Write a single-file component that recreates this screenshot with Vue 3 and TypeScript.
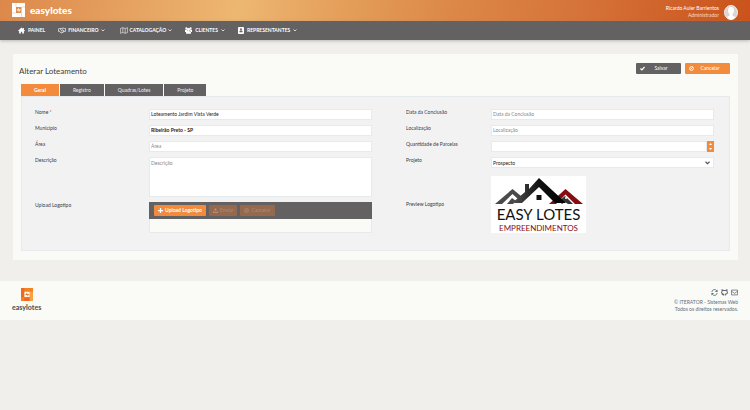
<script setup lang="ts">
import { ref } from 'vue'

interface MenuItem { label: string; icon: string; sub: boolean }

const menu: MenuItem[] = [
  { label: 'PAINEL', icon: 'home', sub: false },
  { label: 'FINANCEIRO', icon: 'hand', sub: true },
  { label: 'CATALOGAÇÃO', icon: 'map', sub: true },
  { label: 'CLIENTES', icon: 'users', sub: true },
  { label: 'REPRESENTANTES', icon: 'book', sub: true },
]
const tabs = ['Geral', 'Registro', 'Quadras/Lotes', 'Projeto']
const active = ref('Geral')
const nome = ref('Loteamento Jardim Vista Verde')
const municipio = ref('Ribeirão Preto - SP')
const area = ref('')
const descricao = ref('')
const data = ref('')
const local = ref('')
const parcelas = ref<number | null>(null)
const projeto = ref('Prospecto')

function step(by: number) {
  parcelas.value = Math.max(0, (parcelas.value ?? 0) + by)
}
</script>

<template>
  <div class="page">
    <header class="top">
      <a class="brand" href="#">
        <svg class="mark" viewBox="0 0 26 28" aria-hidden="true">
          <path fill="#fff" fill-rule="evenodd" d="M0 0H26V28H0ZM8 8V20H19V8Z" />
          <path fill="none" stroke="#e7b083" stroke-width="1" d="M8 0V8M19 8H26M19 20V28M0 20H8" />
          <path fill="#fff" d="M14 9l-1 4h5l-5 6 1-4H9z" />
        </svg>
        <span>easylotes</span>
      </a>
      <div class="user">
        <div class="who">
          <span>Ricardo Auler Barrientos</span>
          <span class="role">Administrador</span>
        </div>
        <svg class="avatar" viewBox="0 0 28 30" aria-hidden="true">
          <ellipse cx="14" cy="15" rx="13" ry="14" fill="#d8d6d5" stroke="#f5eeea" stroke-width="2" />
          <path fill="#fff" d="M14 4c4 0 6 3 6 7 0 3-1 5-3 7v3l5 3c-2 3-4 5-8 5s-6-2-8-5l5-3v-3c-2-2-3-4-3-7 0-4 2-7 6-7z" />
        </svg>
      </div>
    </header>

    <nav class="menu">
      <a v-for="m in menu" :key="m.label" href="#" :class="['item', m.icon]">
        <svg v-if="m.icon === 'home'" class="ico" viewBox="0 0 16 16" aria-hidden="true"><path fill="currentColor" d="M8 1 0 8.500l1 1.200 1.500-1.200V15h4v-4h3v4h4V8.500L15 9.700l1-1.200-2.500-2.300V2h-2v2.200z" /></svg>
        <svg v-else-if="m.icon === 'hand'" class="ico" viewBox="0 0 20 14" aria-hidden="true"><path fill="none" stroke="currentColor" stroke-width="1.800" d="M1 2v7h2l5 4 3-1 5-3h3V2h-3l-3-1-4 1-3 3 2 2 3-2 5 4M3 2h5M9 10l2 2M11 8l3 2" /></svg>
        <svg v-else-if="m.icon === 'map'" class="ico" viewBox="0 0 20 16" aria-hidden="true"><path fill="none" stroke="currentColor" stroke-width="1.400" d="M1 3l6-2 6 2 6-2v12l-6 2-6-2-6 2zM7 1v12M13 3v12" /></svg>
        <svg v-else-if="m.icon === 'users'" class="ico" viewBox="0 0 20 18" aria-hidden="true"><path fill="currentColor" d="M4 0a3 3 0 1 1 0 6 3 3 0 0 1 0-6zM16 0a3 3 0 1 1 0 6 3 3 0 0 1 0-6zM10 2a4 4 0 1 1 0 8 4 4 0 0 1 0-8zM0 7h5l2 4-3 2H0zM20 7h-5l-2 4 3 2h4zM3 18v-5l3-3h8l3 3v5z" /></svg>
        <svg v-else class="ico" viewBox="0 0 14 16" aria-hidden="true"><rect width="14" height="16" rx="2" fill="currentColor" /><path fill="#646162" d="M7 3a2.200 2.200 0 1 1 0 4.500A2.200 2.200 0 0 1 7 3zM3.500 12V9l2-1h3l2 1v3z" /></svg>
        <span>{{ m.label }}</span>
        <svg v-if="m.sub" class="chev" viewBox="0 0 8 6" aria-hidden="true"><path fill="none" stroke="currentColor" stroke-width="1.500" d="M1 1l3 3 3-3" /></svg>
      </a>
    </nav>

    <main class="card">
      <div class="head">
        <h1>Alterar Loteamento</h1>
        <div class="actions">
          <button type="button" class="act">
            <svg class="ico" viewBox="0 0 12 12" aria-hidden="true"><path fill="none" stroke="#fff" stroke-width="3" d="M1 6l3.500 3.500L11 2.500" /></svg>
            <span>Salvar</span>
          </button>
          <button type="button" class="act orange">
            <svg class="ico" viewBox="0 0 12 12" aria-hidden="true"><path fill="none" stroke="#fff" stroke-width="2.400" d="M6 1.500a4.500 4.500 0 1 1 0 9 4.500 4.500 0 0 1 0-9zM3 9l6-6" /></svg>
            <span>Cancelar</span>
          </button>
        </div>
      </div>

      <div class="tabs" role="tablist">
        <button v-for="t in tabs" :key="t" type="button" role="tab" :aria-selected="t === active" :class="['tab', { on: t === active }]" @click="active = t">{{ t }}</button>
      </div>

      <form class="panel" @submit.prevent>
        <div class="col left">
          <div class="row"><label for="nome">Nome <i>*</i></label><input id="nome" v-model="nome" type="text" /></div>
          <div class="row"><label for="mun">Município</label><input id="mun" v-model="municipio" class="strong" type="text" /></div>
          <div class="row"><label for="area">Área</label><input id="area" v-model="area" type="text" placeholder="Área" /></div>
          <div class="row"><label for="desc">Descrição</label><textarea id="desc" v-model="descricao" placeholder="Descrição"></textarea></div>
          <div class="row">
            <label for="upload">Upload Logotipo</label>
            <div class="uploader">
              <div class="bar">
                <button id="upload" type="button">
                  <svg class="ico" viewBox="0 0 12 12" aria-hidden="true"><path stroke="currentColor" stroke-width="3" d="M6 0v12M0 6h12" /></svg>Upload Logotipo
                </button>
                <button type="button" disabled>
                  <svg class="ico" viewBox="0 0 12 12" aria-hidden="true"><path fill="currentColor" d="M6 0l4 4H7.500v4h-3V4H2zM0 8h3v1.500h6V8h3v4H0z" /></svg>Enviar
                </button>
                <button type="button" disabled>
                  <svg class="ico" viewBox="0 0 12 12" aria-hidden="true"><path fill="none" stroke="currentColor" stroke-width="2" d="M6 1.500a4.500 4.500 0 1 1 0 9 4.500 4.500 0 0 1 0-9zM3 9l6-6" /></svg>Cancelar
                </button>
              </div>
              <div class="files"></div>
            </div>
          </div>
        </div>

        <div class="col right">
          <div class="row"><label for="data">Data da Conclusão</label><input id="data" v-model="data" type="text" placeholder="Data da Conclusão" /></div>
          <div class="row"><label for="loc">Localização</label><input id="loc" v-model="local" type="text" placeholder="Localização" /></div>
          <div class="row">
            <label for="parc">Quantidade de Parcelas</label>
            <div class="spin">
              <input id="parc" v-model="parcelas" type="number" />
              <div class="steps">
                <button type="button" aria-label="Aumentar" @click="step(1)"><svg viewBox="0 0 6 4" aria-hidden="true"><path fill="#fff" d="M3 0l3 4H0z" /></svg></button>
                <button type="button" aria-label="Diminuir" @click="step(-1)"><svg viewBox="0 0 6 4" aria-hidden="true"><path fill="#fff" d="M3 4l3-4H0z" /></svg></button>
              </div>
            </div>
          </div>
          <div class="row">
            <label for="proj">Projeto</label>
            <div class="pick">
              <select id="proj" v-model="projeto"><option>Prospecto</option></select>
              <svg viewBox="0 0 10 8" aria-hidden="true"><path fill="none" stroke="#4c5a68" stroke-width="2.400" d="M1 1.500l4 4 4-4" /></svg>
            </div>
          </div>
          <div class="row preview">
            <span class="label">Preview Logotipo</span>
            <figure class="logo">
              <svg viewBox="0 0 94 29" aria-hidden="true">
                <defs>
                  <linearGradient id="roof" x1="0" x2="1" y1="0" y2="0"><stop offset="0" stop-color="#555" /><stop offset=".5" stop-color="#111" /><stop offset="1" stop-color="#000" /></linearGradient>
                </defs>
                <path fill="#4a4a4c" d="M3 28L20.500 13 29 20l-3 3-5.500-5L10 28z" />
                <path fill="#4a4a4c" d="M15 28l5-6 4 3-3 3z" />
                <path fill="#850c10" d="M57 28L73.500 13 91 28h-8L73.500 18.500 64 28z" />
                <path fill="#333" d="M67 25l6-5 8 8h-5l-3-2-3 2z" />
                <circle cx="74" cy="22" r="1" fill="#fff" />
                <path fill="url(#roof)" d="M20 27L33 16V8h4v5L47 2l27 25H63L47 11 30 27z" />
                <path fill="#111" d="M44.500 19h5v5h-5z" />
              </svg>
              <span class="l1">EASY LOTES</span>
              <span class="l2">EMPREENDIMENTOS</span>
            </figure>
          </div>
        </div>
      </form>
    </main>

    <footer class="foot">
      <a class="fbrand" href="#">
        <svg class="mark" viewBox="0 0 26 28" aria-hidden="true">
          <path fill="#f58220" fill-rule="evenodd" d="M0 0H26V28H0ZM7 8V20H19V8Z" />
          <path fill="#ee6a20" d="M0 0h7v20H0zM7 20h12v8H7z" />
          <path fill="#fba040" d="M19 8h7v20h-7z" />
          <path fill="#f0701e" d="M14 9l-1 4h5l-5 6 1-4H9z" />
        </svg>
        <span>easylotes</span>
      </a>
      <div class="legal">
        <div class="links">
          <a href="#" aria-label="Atualizar"><svg viewBox="0 0 16 16" aria-hidden="true"><path fill="none" stroke="currentColor" stroke-width="2" d="M2 7a6 6 0 0 1 11-3M14 9a6 6 0 0 1-11 3" /><path fill="currentColor" d="M15 1v6H9zM1 15V9h6z" /></svg></a>
          <a href="#" aria-label="GitHub"><svg viewBox="0 0 16 16" aria-hidden="true"><path fill="none" stroke="currentColor" stroke-width="2.400" d="M6 15v-3C0 11 1 7 2.500 5.500V2L6 3.500h4L13.500 2v3.500C15 7 16 11 10 12v3M6 13.500c-2 .5-3-.5-4-2" /></svg></a>
          <a href="#" aria-label="E-mail"><svg viewBox="0 0 16 16" aria-hidden="true"><path fill="none" stroke="currentColor" stroke-width="1.800" d="M1 2.500h14v11H1zM1 5l7 5 7-5" /></svg></a>
        </div>
        <span>© ITERATOR - Sistemas Web</span>
        <span>Todos os direitos reservados.</span>
      </div>
    </footer>
  </div>
</template>

<style>
body { background: #f0efeb; }
</style>

<style scoped>
.page { font-family: Lato, "Liberation Sans", sans-serif; font-size: 5px; line-height: 7px; color: #35414d; }
.page * { box-sizing: border-box; }
a { color: inherit; text-decoration: none; }
button, input, textarea, select { font: inherit; color: inherit; border: 0; border-radius: 0; margin: 0; padding: 0; outline: 0; }
button { cursor: pointer; }
svg { display: block; flex: none; }

.top { display: flex; justify-content: space-between; align-items: center; height: 21px; padding: 0 12px; color: #fff; background: linear-gradient(100deg, #dc884b 0%, #e6a361 18%, #edb772 32%, #e5a15d 44%, #dc8848 60%, #d57239 78%, #ca531b 100%); }
.brand { display: flex; align-items: center; gap: 5px; height: 19px; align-self: flex-start; font-size: 10px; line-height: 14px; font-weight: 900; }
.mark { width: 13px; height: 14px; }
.user { display: flex; align-items: center; gap: 5px; }
.who { display: flex; flex-direction: column; padding-top: 2px; text-align: right; }
.role { color: #f7d9c8; }
.avatar { width: 14px; height: 15px; margin-top: 3px; }

.menu { display: flex; align-items: center; gap: 13px; height: 19px; padding: 0 18px; background: #646162; color: #fff; font-weight: 700; box-shadow: 0 1px 3px #8888; }
.item { display: flex; align-items: center; gap: 3px; }
.item .ico { width: 7px; height: 7px; }
.hand .ico, .map .ico { width: 8px; height: 7px; }
.hand, .map { gap: 2px; }
.book .ico { width: 6px; height: 7px; }
.chev { width: 4px; height: 3px; }
.map { padding-left: 2px; }

.card { margin: 14px 12px 0 13px; padding: 9px 8px; background: #fafbf6; }
.head { display: flex; justify-content: space-between; height: 21px; }
h1 { margin: 0 0 0 -2px; padding-top: 3px; font-size: 8px; line-height: 10px; font-weight: 400; color: #404040; }
.actions { display: flex; gap: 4px; }
.act { display: flex; align-items: center; width: 45px; height: 11px; padding: 0 4px; background: #646162; color: #fff; border-radius: 1px; }
.act .ico { width: 5px; height: 5px; }
.act span { flex: 1; text-align: center; }
.act.orange { background: #f28c3c; }

.tabs { display: flex; gap: 1px; }
.tab { height: 12px; padding: 0 13px; background: #646162; color: #eee; font-weight: 400; }
.tab.on { background: #f28c3c; color: #fff; font-weight: 700; }
.panel { display: grid; grid-template-columns: 337fr 308fr; column-gap: 34px; padding: 12px 15px 17px 13px; background: #f2f2f2; border: 1px solid #e6eaec; }
.col { display: flex; flex-direction: column; gap: 5px; }
.row { display: grid; align-items: start; }
.left .row { grid-template-columns: 114fr 223fr; }
.right .row { grid-template-columns: 85fr 223fr; }
label, .label { line-height: 7px; }
label i { color: #c0392b; font-style: normal; }
input, textarea, select { display: block; width: 100%; height: 11px; padding: 0 1px 1px; background: #fff; border: 1px solid #e6eaec; color: #222; }
.strong { font-weight: 700; }
textarea { height: 40px; padding-top: 2px; resize: none; }
::placeholder { color: #888; opacity: 1; }
.uploader { display: flex; flex-direction: column; }
.bar { display: flex; align-items: center; gap: 3px; height: 17px; padding: 0 5px; background: #646162; }
.bar button { display: flex; align-items: center; gap: 2px; height: 11px; padding: 0 4px; background: #f28c3c; color: #fff; font-weight: 700; border-radius: 1px; }
.bar button:disabled { background: #94694e; color: #b08c76; font-weight: 400; }
.bar .ico { width: 5px; height: 5px; }
.files { height: 14px; border: 1px solid #e6eaec; border-top: 0; background: #fafbf6; }

.spin { display: flex; background: #fff; }
.spin input { flex: 1; min-width: 0; appearance: textfield; }
.spin input::-webkit-inner-spin-button { display: none; }
.steps { display: flex; flex-direction: column; width: 7px; background: #f28c3c; }
.steps button { flex: 1; display: flex; align-items: center; justify-content: center; background: none; }
.steps svg { width: 3px; height: 2px; }
.pick { display: grid; align-items: center; }
.pick select, .pick svg { grid-area: 1 / 1; }
.pick select { appearance: none; padding: 1px 1px 0; }
.pick svg { justify-self: end; width: 5px; height: 4px; margin-right: 4px; pointer-events: none; }
.right .preview { align-items: center; padding-top: 3px; }
.logo { display: flex; flex-direction: column; align-items: center; justify-self: start; width: 95px; height: 57px; margin: 0; background: #fff; color: #111; }
.logo svg { width: 94px; height: 29px; }
.l1 { font-size: 15px; line-height: 18px; white-space: nowrap; }
.l2 { font-size: 8px; line-height: 10px; color: #850c10; }

.foot { display: flex; justify-content: space-between; margin-top: 21px; padding: 7px 12px; background: #fafbf6; }
.fbrand { display: flex; flex-direction: column; align-items: center; gap: 2px; font-size: 7px; line-height: 9px; font-weight: 900; color: #555; }
.fbrand .mark { width: 12px; height: 13px; }
.legal { display: flex; flex-direction: column; align-items: flex-end; color: #5f6d7a; }
.links { display: flex; gap: 3px; margin: 1px 0 3px; }
.links svg { width: 7px; height: 7px; }
</style>
